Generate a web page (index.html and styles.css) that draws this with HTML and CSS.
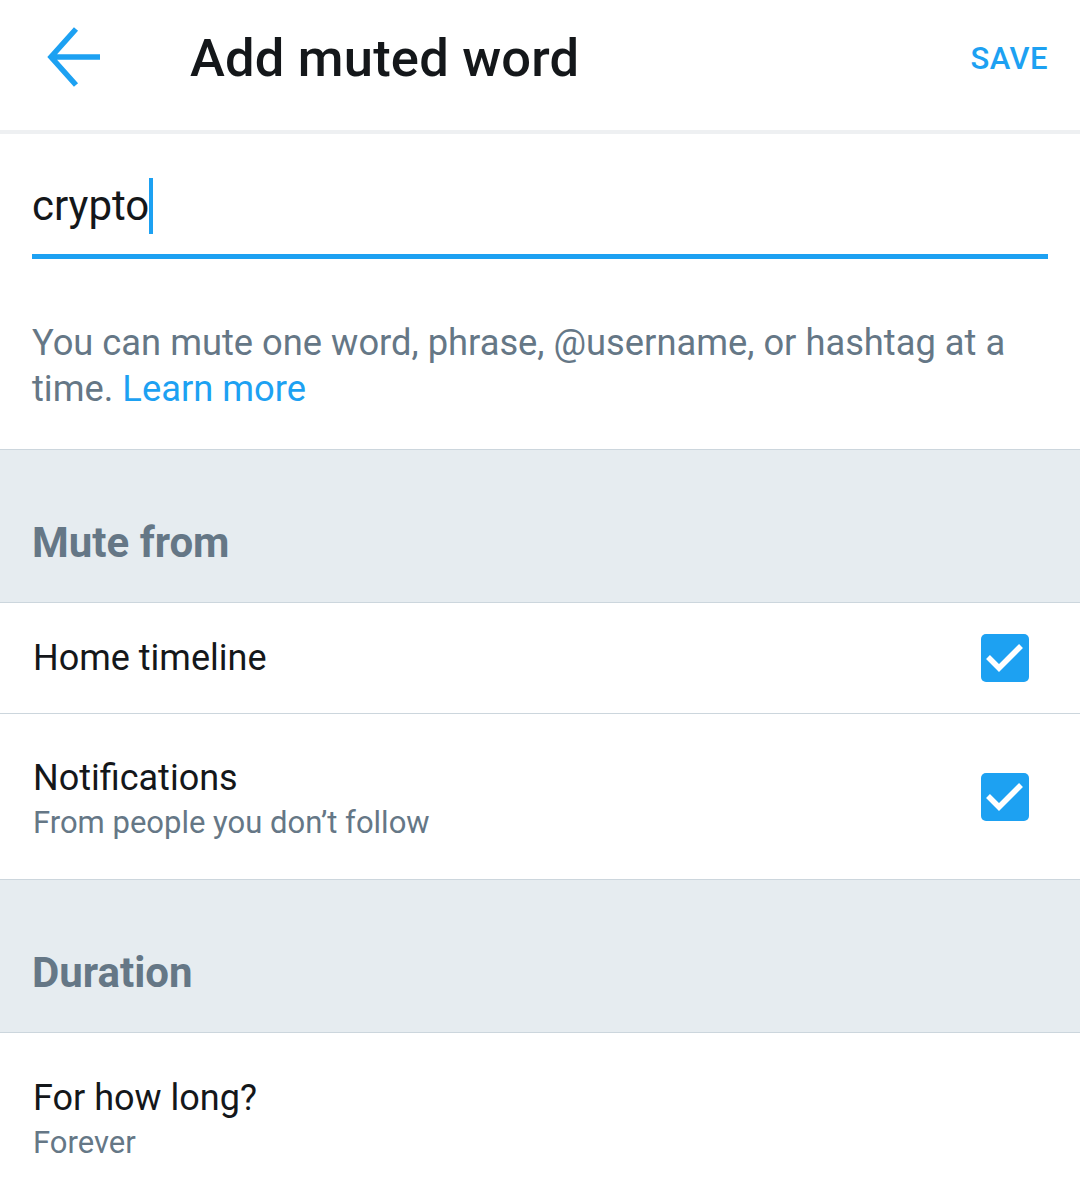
FILE: index.html
```html
<!DOCTYPE html>
<html>
<head>
<meta charset="utf-8">
<link rel="stylesheet" href="styles.css">
</head>
<body>
<div class="app">
  <header class="topbar">
    <div class="back">
      <svg width="60" height="64" viewBox="0 0 60 64"><path d="M29 2 L4 30 L29 58 M4 30 L53 30" fill="none" stroke="#1da1f2" stroke-width="5.5"/></svg>
    </div>
    <h1 class="title">Add muted word</h1>
    <div class="save">SAVE</div>
  </header>
  <section class="input-area">
    <div class="field"><span class="value">crypto</span><span class="caret"></span></div>
    <p class="help">You can mute one word, phrase, @username, or hashtag at a time. <span class="link">Learn more</span></p>
  </section>
  <div class="section-head">Mute from</div>
  <div class="row row-single">
    <div class="row-text"><div class="row-title">Home timeline</div></div>
    <div class="check"><svg width="48" height="48" viewBox="0 0 48 48"><rect x="0" y="0" width="48" height="48" rx="5" fill="#1da1f2"/><path d="M7 23 L18 34 L40 12" fill="none" stroke="#fff" stroke-width="5.5"/></svg></div>
  </div>
  <div class="row row-double">
    <div class="row-text"><div class="row-title">Notifications</div><div class="row-sub">From people you don’t follow</div></div>
    <div class="check"><svg width="48" height="48" viewBox="0 0 48 48"><rect x="0" y="0" width="48" height="48" rx="5" fill="#1da1f2"/><path d="M7 23 L18 34 L40 12" fill="none" stroke="#fff" stroke-width="5.5"/></svg></div>
  </div>
  <div class="section-head">Duration</div>
  <div class="row row-double last">
    <div class="row-text"><div class="row-title">For how long?</div><div class="row-sub">Forever</div></div>
  </div>
</div>
</body>
</html>
```

FILE: styles.css
```css
* { box-sizing: border-box; }
html, body { margin: 0; padding: 0; background: #fff; }
body { font-family: Roboto, "Noto Sans", sans-serif; color: #14171a; }
.app { width: 1080px; height: 1180px; overflow: hidden; }

.topbar {
  height: 134px;
  display: flex;
  align-items: center;
  padding: 0 32px 14px 47px;
  border-bottom: 4px solid #eef0f2;
}
.back { width: 60px; height: 64px; display: flex; margin-top: 2px; }
.title {
  margin: 0 0 0 83px;
  font-size: 52.5px;
  font-weight: 500;
  flex: 1;
  letter-spacing: 0.2px;
}
.save {
  color: #1da1f2;
  font-size: 31px;
  font-weight: 500;
  letter-spacing: 0.5px;
}

.input-area { padding: 0 32px; border-bottom: 1px solid #ccd6dd; }
.field {
  height: 125px;
  display: flex;
  align-items: flex-end;
  padding-bottom: 20px;
  border-bottom: 5px solid #1da1f2;
}
.value { font-size: 42px; line-height: 56px; }
.caret { width: 4px; height: 56px; background: #1da1f2; margin-left: 0; }
.help {
  margin: 0;
  padding: 61px 0 37px;
  font-size: 36.3px;
  line-height: 46px;
  color: #657786;
}
.link { color: #1da1f2; }

.section-head {
  height: 153px;
  background: #e6ecf0;
  border-bottom: 1px solid #ccd6dd;
  display: flex;
  align-items: flex-end;
  padding: 0 32px 35px;
  font-size: 42px;
  font-weight: 700;
  color: #657786;
}

.row {
  display: flex;
  align-items: center;
  padding: 0 51px 0 33px;
  border-bottom: 1px solid #ccd6dd;
}
.row.last { border-bottom: none; }
.row-single { height: 111px; }
.row-double { height: 166px; }
.row-double .row-text { padding-top: 8px; }
.row-text { flex: 1; }
.row-title { font-size: 36px; line-height: 45px; color: #14171a; }
.row-sub { font-size: 31px; line-height: 44px; color: #657786; }
.check { width: 48px; height: 48px; display: flex; }
```
